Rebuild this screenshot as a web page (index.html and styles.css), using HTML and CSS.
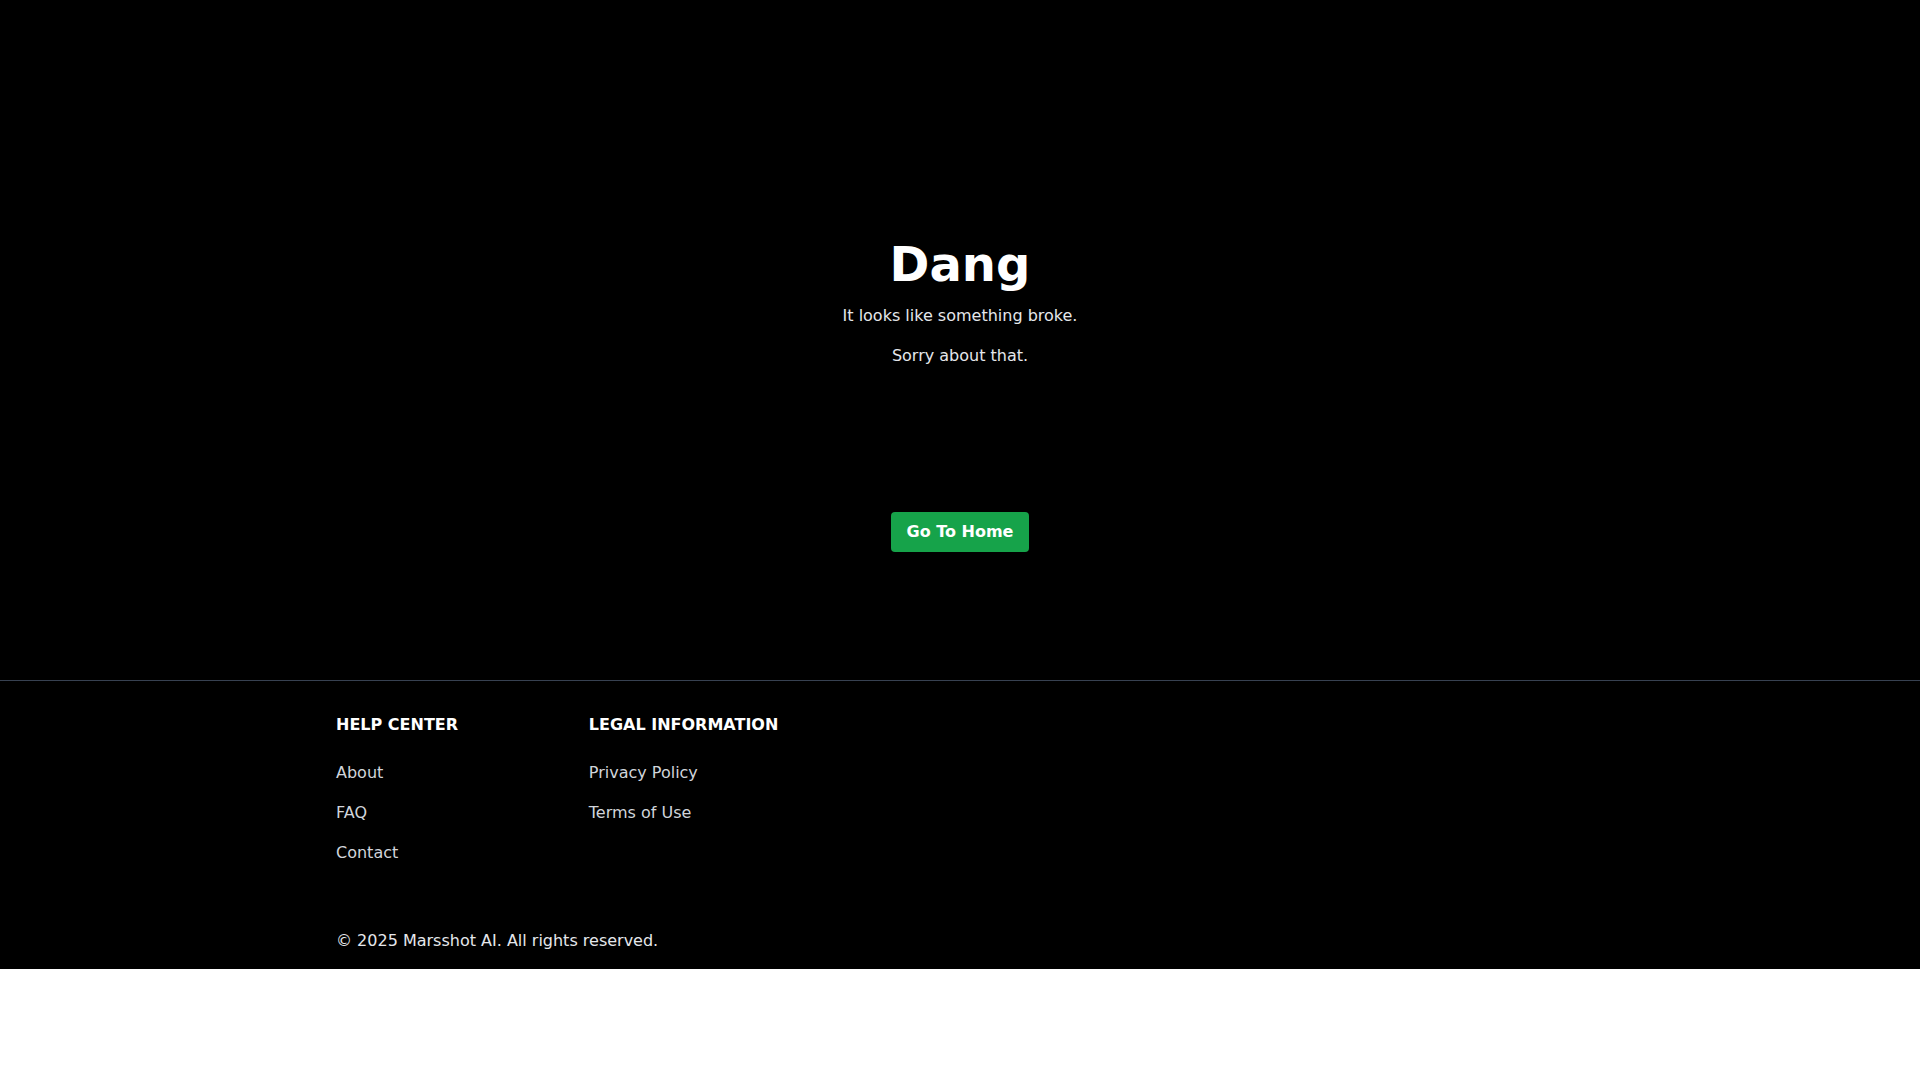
FILE: index.html
```html
<!DOCTYPE html>
<html lang="en">
<head>
<meta charset="utf-8">
<title>Dang</title>
<link rel="stylesheet" href="styles.css">
</head>
<body>
<div class="page">
  <main class="error">
    <h1 class="error-title">Dang</h1>
    <p class="error-text">It looks like something broke.</p>
    <p class="error-text">Sorry about that.</p>
    <a class="home-btn" href="#">Go To Home</a>
  </main>
  <footer class="footer">
    <div class="footer-inner">
      <div class="footer-grid">
        <div class="footer-col">
          <h3 class="footer-heading">HELP CENTER</h3>
          <ul class="footer-links">
            <li><a href="#">About</a></li>
            <li><a href="#">FAQ</a></li>
            <li><a href="#">Contact</a></li>
          </ul>
        </div>
        <div class="footer-col">
          <h3 class="footer-heading">LEGAL INFORMATION</h3>
          <ul class="footer-links">
            <li><a href="#">Privacy Policy</a></li>
            <li><a href="#">Terms of Use</a></li>
          </ul>
        </div>
      </div>
      <p class="copyright">© 2025 Marsshot AI. All rights reserved.</p>
    </div>
  </footer>
</div>
</body>
</html>
```
FILE: styles.css
```css
* { box-sizing: border-box; }
html, body { margin: 0; padding: 0; background: #ffffff; }
body {
  font-family: "DejaVu Sans", "Liberation Sans", sans-serif;
  font-size: 16px;
  line-height: 24px;
}
.page { background: #000000; color: #ffffff; }

.error {
  height: 680px;
  padding-top: 240px;
  display: flex;
  flex-direction: column;
  align-items: center;
}
.error-title {
  margin: 0 0 16px;
  font-size: 48px;
  line-height: 48px;
  font-weight: 700;
  color: #ffffff;
}
.error-text {
  margin: 0 0 16px;
  color: #e5e7eb;
}
.home-btn {
  margin-top: 128px;
  display: inline-block;
  background: #16a34a;
  color: #ffffff;
  font-weight: 700;
  text-decoration: none;
  padding: 8px 16px;
  border-radius: 4px;
}

.footer { border-top: 1px solid #374151; }
.footer-inner {
  max-width: 1280px;
  margin: 0 auto;
  padding: 32px 16px 16px;
}
.footer-grid {
  display: grid;
  grid-template-columns: repeat(5, 1fr);
  gap: 16px;
}
.footer-heading {
  margin: 0 0 24px;
  font-size: 16px;
  line-height: 24px;
  font-weight: 700;
  color: #ffffff;
}
.footer-links {
  list-style: none;
  margin: 0;
  padding: 0;
  display: flex;
  flex-direction: column;
  gap: 16px;
}
.footer-links a { color: #d1d5db; text-decoration: none; }
.copyright {
  margin: 64px 0 0;
  color: #e5e7eb;
}
```
